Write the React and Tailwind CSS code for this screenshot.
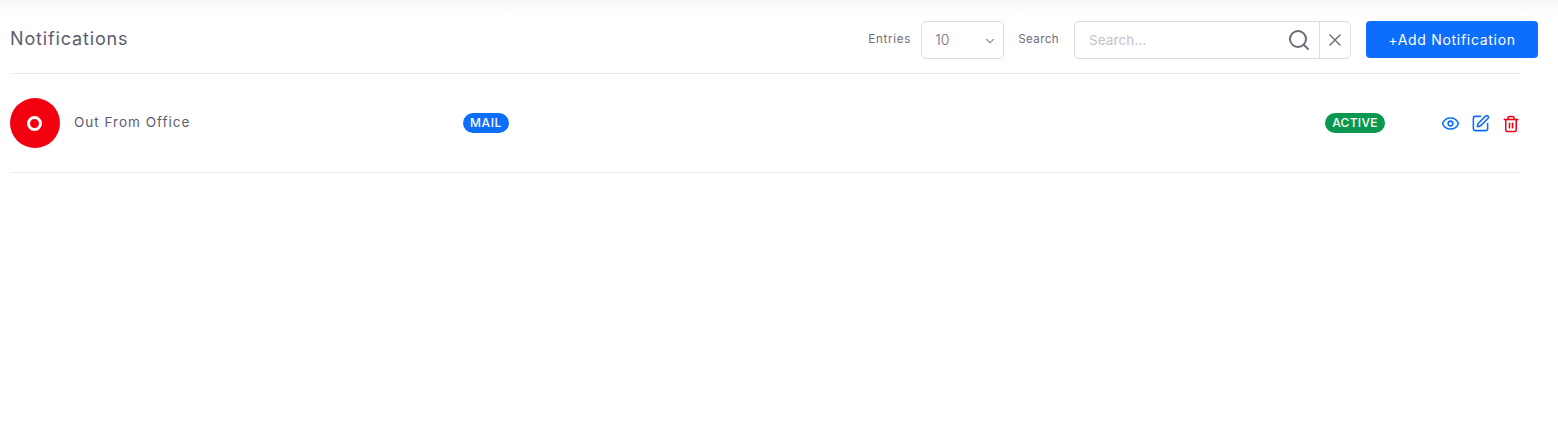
import { ChevronDown, Search, X, Eye, SquarePen, Trash2 } from 'lucide-react';

export default function App() {
  return (
    <div className="min-h-[434px] pl-[10px] bg-white bg-gradient-to-b from-[#f6f6f7] to-white to-[12px] font-['Inter','Noto_Sans',sans-serif] text-[#5e5c72]">
      {/* header */}
      <div className="flex items-start justify-between w-[1528px] pt-[21px] h-[73px]">
        <h1 className="text-[18px] leading-[36px] font-normal tracking-[0.85px]">Notifications</h1>
        <div className="flex items-center h-[37px]">
          <span className="text-[11.5px] tracking-[0.75px] text-[#6c6a7c] mr-[10px] mt-[1px]">Entries</span>
          <div className="flex items-center justify-between w-[83px] h-[38px] border border-[#dcdce3] rounded-[5px] pl-[13px] pr-[6px] mr-[14px] text-[14px] font-light text-[#6c6a7c]">
            <span className="-mt-[1px]">10</span>
            <ChevronDown size={14} strokeWidth={1.75} className="mt-[2px]" />
          </div>
          <span className="text-[11.5px] tracking-[0.45px] text-[#6c6a7c] mr-[15px] mt-[1px]">Search</span>
          <div className="flex items-stretch w-[277px] h-[38px] border border-[#dcdce3] rounded-[5px] mr-[15px]">
            <div className="flex flex-1 items-center justify-between pl-[14px] pr-[8px] border-r border-[#dcdce3]">
              <span className="text-[13.5px] tracking-[0.1px] text-[#c2c2cb] mt-[1px]">Search...</span>
              <Search size={24} strokeWidth={2} className="text-[#6b6a78]" />
            </div>
            <div className="flex w-[30px] items-center justify-center">
              <X size={20} strokeWidth={1.6} className="text-[#6b6a78] mt-[1px]" />
            </div>
          </div>
          <button className="w-[172px] h-[37px] rounded-[4px] bg-[#0d6efd] text-white text-[14px] tracking-[0.7px]">+Add Notification</button>
        </div>
      </div>

      {/* row */}
      <div className="w-[1510px] border-t border-[#e9e9ef]">
        <div className="flex items-center h-[99px] border-b border-[#e9e9ef]">
          <div className="flex items-center w-[453px]">
            <div className="flex items-center justify-center w-[50px] h-[50px] rounded-full bg-[#f2000f]">
              <span className="block w-[15px] h-[15px] rounded-full border-[3px] border-white -ml-[1px]" />
            </div>
            <span className="ml-[14px] text-[13.5px] tracking-[1px] -mt-[1px]">Out From Office</span>
          </div>
          <div className="flex flex-1 -mt-[1px]">
            <span className="flex items-center justify-center w-[46px] h-[20px] rounded-full bg-[#0d6efd] text-white text-[12px] font-medium tracking-[0.6px]">MAIL</span>
          </div>
          <span className="flex items-center justify-center w-[60px] h-[20px] rounded-full bg-[#0a9850] text-white text-[12px] font-medium tracking-[0.3px] -mt-[1px]">ACTIVE</span>
          <div className="flex items-center ml-[56px] w-[79px] justify-between mt-[1px]">
            <Eye size={19} strokeWidth={2} className="text-[#0d6efd]" />
            <SquarePen size={19} strokeWidth={2} className="text-[#0d6efd] -ml-[1px] -mt-[1px]" />
            <Trash2 size={18} strokeWidth={2} className="text-[#f2000f]" />
          </div>
        </div>
      </div>
    </div>
  );
}
